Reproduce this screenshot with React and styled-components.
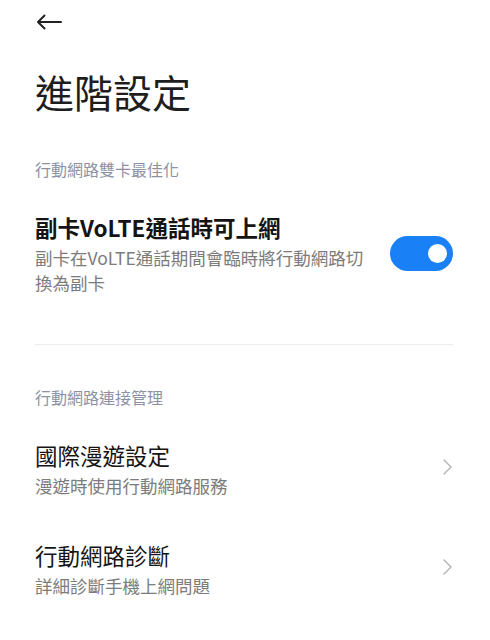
import React, { useState } from "react";
import styled, { createGlobalStyle } from "styled-components";

const GlobalStyle = createGlobalStyle`
  body {
    margin: 0;
    background: #ffffff;
    font-family: "Noto Sans CJK TC", "Noto Sans", sans-serif;
  }
`;

export default function App() {
  const [dualData, setDualData] = useState(true);

  return (
    <Page>
      <GlobalStyle />
      <Header>
        <BackButton aria-label="back">
          <svg width="26" height="16" viewBox="0 0 26 16" fill="none">
            <path
              d="M25 8H2M8.5 1.5L2 8l6.5 6.5"
              stroke="#222"
              strokeWidth="2"
              strokeLinecap="round"
              strokeLinejoin="round"
            />
          </svg>
        </BackButton>
      </Header>

      <PageTitle>進階設定</PageTitle>

      <SectionLabel>行動網路雙卡最佳化</SectionLabel>
      <Row>
        <RowText>
          <RowTitle $bold>副卡VoLTE通話時可上網</RowTitle>
          <RowSub>副卡在VoLTE通話期間會臨時將行動網路切換為副卡</RowSub>
        </RowText>
        <Toggle $on={dualData} onClick={() => setDualData(!dualData)}>
          <Knob $on={dualData} />
        </Toggle>
      </Row>

      <Divider />

      <SectionLabel>行動網路連接管理</SectionLabel>
      <Row>
        <RowText>
          <RowTitle>國際漫遊設定</RowTitle>
          <RowSub>漫遊時使用行動網路服務</RowSub>
        </RowText>
        <Chevron />
      </Row>
      <Row>
        <RowText>
          <RowTitle>行動網路診斷</RowTitle>
          <RowSub>詳細診斷手機上網問題</RowSub>
        </RowText>
        <Chevron />
      </Row>
    </Page>
  );
}

function Chevron() {
  return (
    <ChevronBox>
      <svg width="9" height="16" viewBox="0 0 9 16" fill="none">
        <path
          d="M1 1l7 7-7 7"
          stroke="#b3b3b3"
          strokeWidth="1.4"
          strokeLinecap="round"
          strokeLinejoin="round"
        />
      </svg>
    </ChevronBox>
  );
}

const Page = styled.div`
  width: 490px;
  min-height: 640px;
  box-sizing: border-box;
  padding: 0 37px 0 35px;
  background: #ffffff;
`;

const Header = styled.div`
  height: 44px;
  display: flex;
  align-items: center;
`;

const BackButton = styled.button`
  display: flex;
  align-items: center;
  border: none;
  background: none;
  padding: 0;
  margin-left: 1px;
  cursor: pointer;
`;

const PageTitle = styled.h1`
  margin: 22px 0 42px;
  font-size: 39px;
  line-height: 50px;
  font-weight: 400;
  color: #1e1e1e;
`;

const SectionLabel = styled.div`
  font-size: 16px;
  line-height: 22px;
  color: #8c92a3;
  margin-bottom: 11px;
`;

const Row = styled.div`
  display: flex;
  align-items: center;
  justify-content: space-between;
  padding: 21px 0;
`;

const RowText = styled.div`
  display: flex;
  flex-direction: column;
  gap: 3px;
  max-width: 340px;
`;

const RowTitle = styled.div`
  font-size: 22.5px;
  line-height: 30px;
  font-weight: ${(p) => (p.$bold ? 700 : 400)};
  color: #141414;
`;

const RowSub = styled.div`
  font-size: 17.5px;
  line-height: 25px;
  color: #7c7c7c;
`;

const Toggle = styled.div`
  position: relative;
  width: 63px;
  height: 35px;
  border-radius: 18px;
  background: ${(p) => (p.$on ? "#1a80f5" : "#d9d9d9")};
  flex-shrink: 0;
  cursor: pointer;
`;

const Knob = styled.div`
  position: absolute;
  top: 8px;
  left: ${(p) => (p.$on ? "38px" : "7px")};
  width: 19px;
  height: 19px;
  border-radius: 50%;
  background: #ffffff;
`;

const ChevronBox = styled.div`
  display: flex;
  align-items: center;
  margin-right: 1px;
  margin-top: -4px;
`;

const Divider = styled.div`
  height: 1px;
  background: #ececec;
  margin: 28px 0 41px;
`;
